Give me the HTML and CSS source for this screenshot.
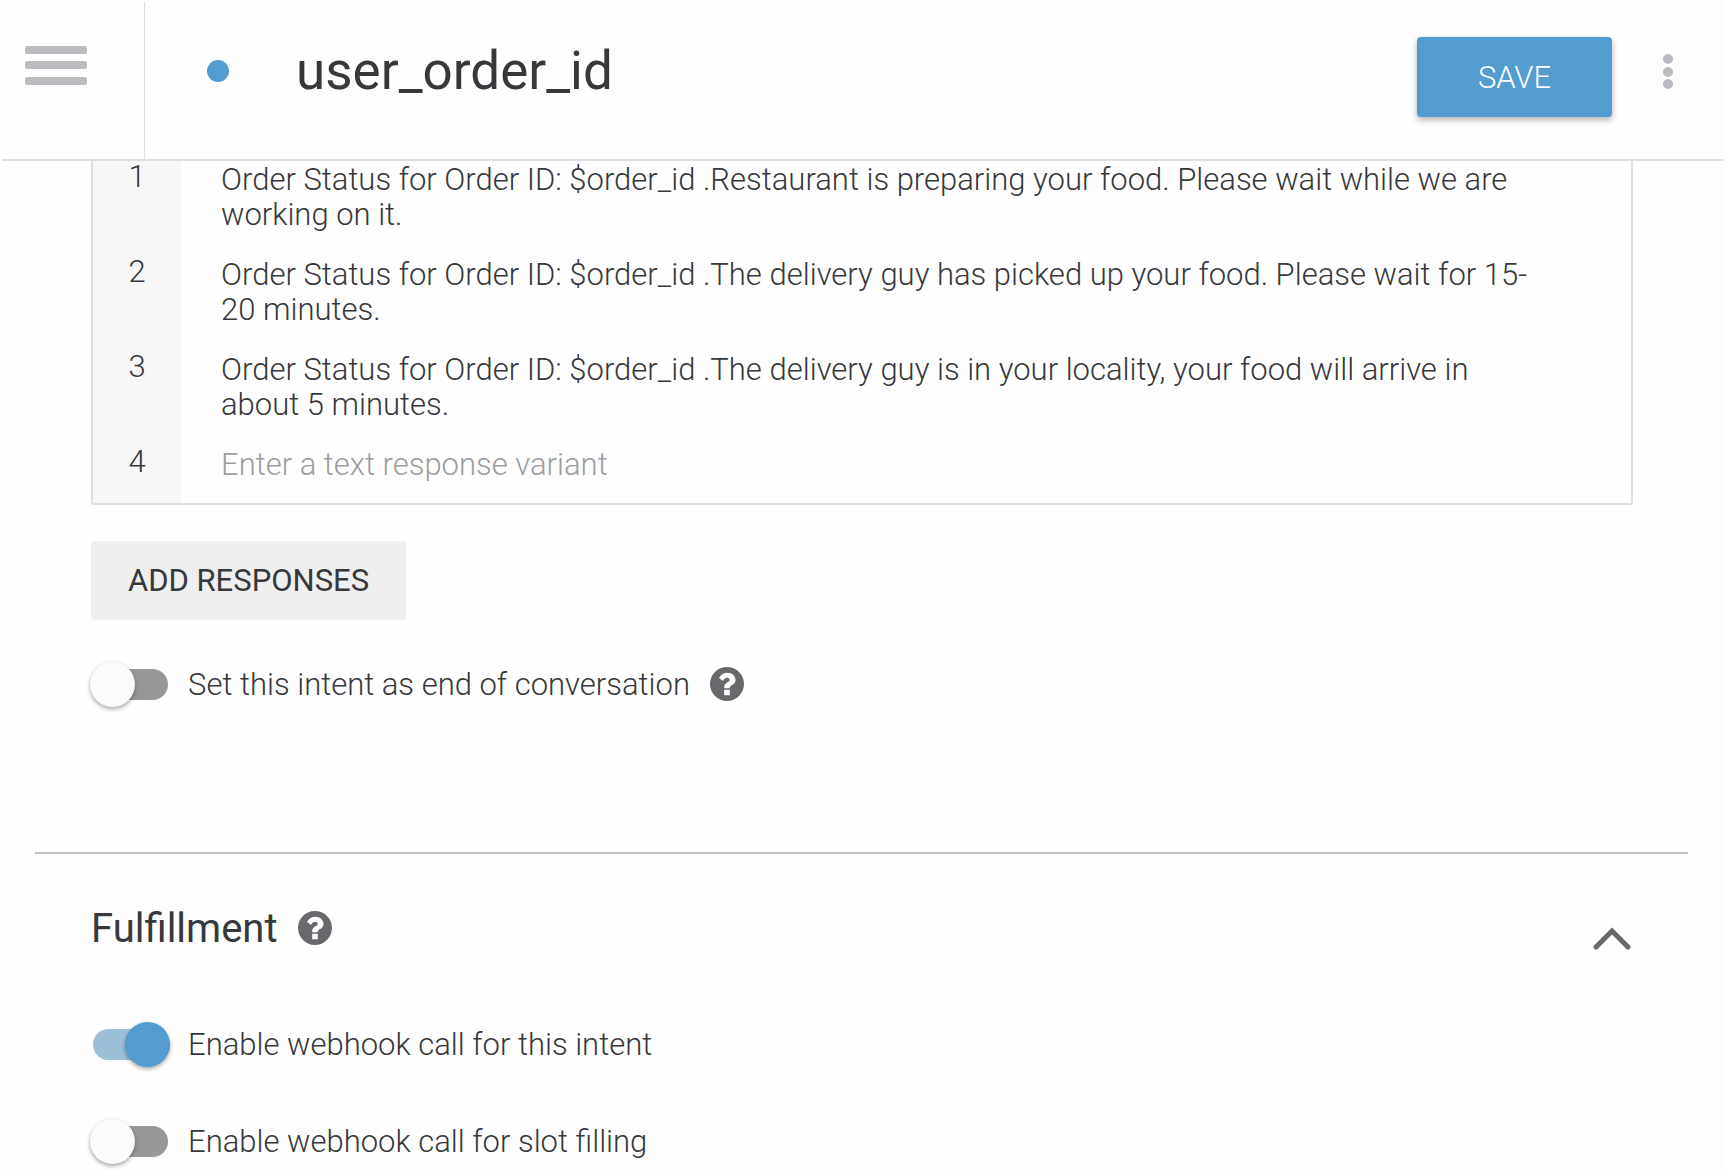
FILE: index.html
```html
<!DOCTYPE html>
<html lang="en">
<head>
<meta charset="utf-8">
<title>user_order_id</title>
<meta name="viewport" content="width=device-width, initial-scale=1">
<link rel="stylesheet" href="styles.css">
</head>
<body>
<svg class="sprite" aria-hidden="true">
  <symbol id="help" viewBox="128 128 1536 1536">
    <path d="M896 1376v-192q0-14-9-23t-23-9h-192q-14 0-23 9t-9 23v192q0 14 9 23t23 9h192q14 0 23-9t9-23zM1152 704q0-88-55.500-163t-138.500-116-170-41q-243 0-371 213-15 24 8 42l132 100q7 6 19 6 16 0 25-12 53-68 86-92 34-24 86-24 48 0 85.500 26t37.500 59q0 38-20 61t-68 45q-63 28-115.500 86.500t-52.500 125.500v36q0 14 9 23t23 9h192q14 0 23-9t9-23q0-19 21.500-49.500t54.500-49.500q32-18 49-28.500t46-35 44.500-48 28-60.500 12.500-81z" transform="translate(128 0)" fill="#fff"/>
  </symbol>
</svg>

<header class="topbar">
  <button class="menu-button" type="button" aria-label="Menu">
    <svg width="62" height="40" viewBox="0 0 62 40" fill="#bbbdc1" aria-hidden="true">
      <rect width="62" height="8" rx="2"/>
      <rect y="15" width="62" height="8" rx="2"/>
      <rect y="31" width="62" height="8" rx="2"/>
    </svg>
  </button>
  <div class="title-area">
    <span class="status-dot"></span>
    <h1 class="title">user_order_id</h1>
    <button class="button button-primary" type="button">SAVE</button>
    <button class="more-button" type="button" aria-label="More options">
      <svg width="10" height="36" viewBox="0 0 10 36" fill="#bbbcc1" aria-hidden="true">
        <circle cx="5" cy="5" r="5"/>
        <circle cx="5" cy="18" r="5"/>
        <circle cx="5" cy="30" r="5"/>
      </svg>
    </button>
  </div>
</header>

<main class="content">
  <section class="section">
    <ol class="responses">
      <li class="response">
        <span class="number">1</span>
        <p class="text">Order Status for Order ID: $order_id .Restaurant is preparing your food. Please wait while we are working on it.</p>
      </li>
      <li class="response">
        <span class="number">2</span>
        <p class="text">Order Status for Order ID: $order_id .The delivery guy has picked up your food. Please wait for 15-20 minutes.</p>
      </li>
      <li class="response">
        <span class="number">3</span>
        <p class="text">Order Status for Order ID: $order_id .The delivery guy is in your locality, your food will arrive in about 5 minutes.</p>
      </li>
      <li class="response">
        <label class="number" for="variant">4</label>
        <input class="text" id="variant" type="text" placeholder="Enter a text response variant">
      </li>
    </ol>
    <button class="button button-flat" type="button">ADD RESPONSES</button>
    <div class="setting">
      <input class="switch" type="checkbox" id="end">
      <label for="end">Set this intent as end of conversation</label>
      <svg class="help" role="img" aria-label="Help"><circle cx="17" cy="17" r="17"/><use href="#help"/></svg>
    </div>
  </section>

  <section class="section fulfillment">
    <div class="section-head">
      <h2 class="heading">Fulfillment</h2>
      <svg class="help" role="img" aria-label="Help"><circle cx="17" cy="17" r="17"/><use href="#help"/></svg>
      <button class="collapse" type="button" aria-label="Collapse">
        <svg width="38" height="24" viewBox="0 0 38 24" fill="none" stroke="#68696c" stroke-width="5" stroke-linecap="round" aria-hidden="true">
          <path d="M3 20 19 4 35 20"/>
        </svg>
      </button>
    </div>
    <div class="setting">
      <input class="switch" type="checkbox" id="intent" checked>
      <label for="intent">Enable webhook call for this intent</label>
    </div>
    <div class="setting">
      <input class="switch" type="checkbox" id="slot">
      <label for="slot">Enable webhook call for slot filling</label>
    </div>
  </section>
</main>
</body>
</html>
```
FILE: styles.css
```css
* {
  box-sizing: border-box;
}

body {
  margin: 0;
  background: #fefefe;
  color: #37383b;
  font: 300 31px/35px Roboto, "Liberation Sans", sans-serif;
}

h1, h2, p, ol {
  margin: 0;
  padding: 0;
}

button {
  border: 0;
  padding: 0;
  background: none;
  font: inherit;
  color: inherit;
  cursor: pointer;
}

svg {
  display: block;
}

.sprite {
  display: none;
}

/* Top bar */
.topbar {
  display: flex;
  margin: 0 2px;
  padding-top: 2px;
  height: 161px;
  border-bottom: 2px solid #e0e0e1;
}

.menu-button {
  display: flex;
  align-items: flex-start;
  padding: 44px 57px 0 23px;
  border-right: 1px solid #dfdfe0;
}

.title-area {
  flex: 1;
  display: flex;
  align-items: flex-start;
  padding: 35px 50px 0 62px;
}

.status-dot {
  width: 22px;
  height: 22px;
  margin-top: 23px;
  border-radius: 50%;
  background: #539ccf;
}

.title {
  flex: 1;
  margin-left: 67px;
  font-size: 53px;
  line-height: 68px;
  font-weight: 400;
}

.button {
  height: 80px;
  border-radius: 4px;
}

.button-primary {
  width: 195px;
  background: #539ccf;
  color: #fff;
  box-shadow: 0 3px 6px rgba(0, 0, 0, 0.3);
}

.more-button {
  margin: 17px 0 0 51px;
}

/* Sections */
.content {
  padding-bottom: 12px;
}

.section {
  padding: 0 92px 0 91px;
}

.responses {
  list-style: none;
  border: solid #dfdfe0;
  border-width: 0 2px 2px;
  border-radius: 0 0 3px 3px;
}

.response {
  display: flex;
}

.number {
  width: 88px;
  background: #f7f7f7;
  text-align: center;
  line-height: 32px;
}

.text {
  flex: 1;
  min-width: 0;
  margin: 1px 100px 24px 40px;
}

input.text {
  height: 35px;
  margin-bottom: 21px;
  border: 0;
  padding: 0;
  outline: 0;
  background: none;
  font: inherit;
}

.text::placeholder {
  color: #9c9da2;
  opacity: 1;
}

.button-flat {
  width: 315px;
  height: 79px;
  margin: 36px 0 42px;
  background: #efefef;
  font-weight: 400;
}

.setting {
  display: flex;
  align-items: center;
  height: 45px;
}

.help {
  width: 34px;
  height: 34px;
  margin: 0 0 2px 20px;
  fill: #68696c;
}

/* Toggle switch */
.switch {
  appearance: none;
  display: flex;
  align-items: center;
  width: 75px;
  height: 31px;
  margin: 0 20px 0 2px;
  border-radius: 16px;
  background: #98989a;
  cursor: pointer;
}

.switch::before {
  content: "";
  width: 45px;
  height: 45px;
  margin-left: -3px;
  flex-shrink: 0;
  border-radius: 50%;
  background: #fbfbfb;
  box-shadow: 0 2px 4px rgba(0, 0, 0, 0.35);
}

.switch:checked {
  background: #9dc0d9;
}

.switch:checked::before {
  margin-left: 32px;
  background: #539ccf;
}

/* Fulfillment */
.fulfillment {
  margin: 145px 37px 0 35px;
  padding: 52px 57px 0 56px;
  border-top: 2px solid #bfc2c6;
}

.section-head {
  display: flex;
  align-items: center;
  margin-bottom: 70px;
}

.heading {
  font-size: 40px;
  line-height: 46px;
  font-weight: 400;
}

.collapse {
  margin: 20px 0 0 auto;
}

.fulfillment .setting + .setting {
  margin-top: 52px;
}
```
